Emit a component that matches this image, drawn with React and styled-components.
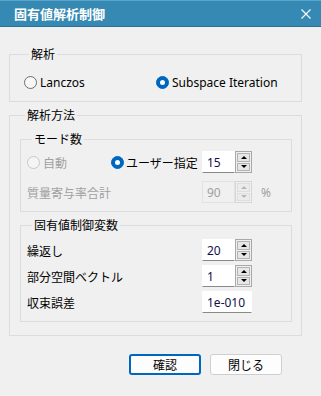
import React from 'react';
import styled, { createGlobalStyle } from 'styled-components';

const GlobalStyle = createGlobalStyle`
  html, body { margin: 0; padding: 0; background: #f0f0f0; }
  body {
    font-family: "Noto Sans", "Noto Sans CJK JP", sans-serif;
    font-size: 12px;
    color: #000;
  }
`;

const Window = styled.div`
  width: 321px;
  height: 396px;
  background: #f0f0f0;
  display: flex;
  flex-direction: column;
  overflow: hidden;
`;

const TitleBar = styled.div`
  flex: none;
  height: 27px;
  box-sizing: border-box;
  background: #3589b2;
  border-top: 1px solid #5aa7cd;
  border-bottom: 1px solid #2c6f90;
  display: flex;
  align-items: center;
  justify-content: space-between;
  padding: 0 10px 0 14px;
  color: #fff;
  font-family: "Noto Sans CJK JP", sans-serif;
  font-weight: bold;
  font-size: 13px;
`;

const CloseIcon = () => (
  <svg width="10" height="10" viewBox="0 0 10 10">
    <path d="M0.5 0.5 L9.5 9.5 M9.5 0.5 L0.5 9.5" stroke="#fff" strokeWidth="1.1" />
  </svg>
);

const Body = styled.div`
  display: flex;
  flex-direction: column;
  padding: 20px 19px 0 9px;
`;

const Group = styled.fieldset`
  margin: ${p => p.$margin || '0'};
  padding: ${p => p.$pad || '0'};
  border: 1px solid #dcdcdc;
  min-width: 0;
  display: flex;
  flex-direction: column;
`;

const Legend = styled.legend`
  margin-left: 5px;
  padding: 0 2px;
  line-height: 14px;
  font-size: 12px;
  font-family: "Noto Sans CJK JP", sans-serif;
  color: #000;
`;

const Row = styled.div`
  display: flex;
  align-items: center;
  height: ${p => p.$h || 22}px;
`;

const Choice = styled.label`
  display: flex;
  align-items: center;
  gap: ${p => p.$gap || 3}px;
  width: ${p => p.$w ? `${p.$w}px` : 'auto'};
  color: ${p => (p.$disabled ? '#a0a0a0' : '#000')};
  flex: none;
`;

const Radio = styled.span`
  box-sizing: border-box;
  width: 13px;
  height: 13px;
  border-radius: 50%;
  flex: none;
  background: ${p => (p.$checked ? '#0067c0' : p.$disabled ? '#f5f5f5' : '#f7f7f7')};
  border: 1px solid ${p => (p.$checked ? '#0067c0' : p.$disabled ? '#c8c8c8' : '#6e6e6e')};
  display: flex;
  align-items: center;
  justify-content: center;
  &::after {
    content: '';
    display: ${p => (p.$checked ? 'block' : 'none')};
    width: 5px;
    height: 5px;
    border-radius: 50%;
    background: #fff;
  }
`;

const Label = styled.span`
  width: ${p => p.$w}px;
  flex: none;
  font-family: "Noto Sans CJK JP", sans-serif;
  color: ${p => (p.$disabled ? '#a0a0a0' : '#000')};
`;

const Spin = styled.div`
  display: flex;
  height: 22px;
`;

const Field = styled.div`
  box-sizing: border-box;
  width: ${p => p.$w || 33}px;
  height: 22px;
  padding: 0 4px;
  display: flex;
  align-items: center;
  background: ${p => (p.$disabled ? '#f0f0f0' : '#fff')};
  border: 1px solid ${p => (p.$disabled ? '#e2e2e2' : '#fff')};
  border-bottom-color: ${p => (p.$disabled ? '#e2e2e2' : '#8a8a8a')};
  color: ${p => (p.$disabled ? '#a0a0a0' : '#10104a')};
  font-family: "Noto Sans", sans-serif;
  font-size: 12px;
`;

const Steps = styled.div`
  box-sizing: border-box;
  width: 17px;
  height: 22px;
  border: 1px solid ${p => (p.$disabled ? '#d6d6d6' : '#a8a8a8')};
  padding: 1px;
  display: flex;
  flex-direction: column;
  gap: 1px;
  background: #f0f0f0;
`;

const Step = styled.div`
  flex: 1;
  box-sizing: border-box;
  border: 1px solid ${p => (p.$disabled ? '#dedede' : '#b4b4b4')};
  background: ${p => (p.$disabled ? '#ececec' : '#e6e6e6')};
  display: flex;
  align-items: center;
  justify-content: center;
  &::after {
    content: '';
    width: 0;
    height: 0;
    border-left: 3px solid transparent;
    border-right: 3px solid transparent;
    ${p => (p.$down ? 'border-top' : 'border-bottom')}: 3px solid ${p => (p.$disabled ? '#b8b8b8' : '#000')};
  }
`;

const Unit = styled.span`
  margin-left: 9px;
  color: #a0a0a0;
`;

const Buttons = styled.div`
  display: flex;
  justify-content: flex-end;
  gap: 9px;
  padding: 18px 20px 0 0;
`;

const Button = styled.button`
  box-sizing: border-box;
  width: 72px;
  height: 21px;
  border-radius: 3px;
  background: #fdfdfd;
  border: ${p => (p.$primary ? '2px solid #0067c0' : '1px solid #cfcfcf')};
  font-family: "Noto Sans CJK JP", sans-serif;
  font-size: 12px;
  color: #000;
  padding: 0;
`;

const SpinBox = ({ value, disabled }) => (
  <Spin>
    <Field $disabled={disabled}>{value}</Field>
    <Steps $disabled={disabled}>
      <Step $disabled={disabled} />
      <Step $disabled={disabled} $down />
    </Steps>
  </Spin>
);

export default function App() {
  return (
    <Window>
      <GlobalStyle />
      <TitleBar>
        <span>固有値解析制御</span>
        <CloseIcon />
      </TitleBar>
      <Body>
        <Group $pad="14px 0 12px 14px">
          <Legend>解析</Legend>
          <Row $h={14}>
            <Choice $w={132}>
              <Radio />
              <span>Lanczos</span>
            </Choice>
            <Choice>
              <Radio $checked />
              <span>Subspace Iteration</span>
            </Choice>
          </Row>
        </Group>

        <Group $margin="6px 0 0 0" $pad="10px 9px 13px 10px">
          <Legend>解析方法</Legend>
          <Group $pad="5px 0 8px 6px">
            <Legend>モード数</Legend>
            <Row>
              <Choice $w={84} $disabled>
                <Radio $disabled />
                <Label $disabled>自動</Label>
              </Choice>
              <Choice $w={91} $gap={2}>
                <Radio $checked />
                <Label>ユーザー指定</Label>
              </Choice>
              <SpinBox value="15" />
            </Row>
            <Row style={{ marginTop: 8 }}>
              <Label $w={175} $disabled>質量寄与率合計</Label>
              <SpinBox value="90" disabled />
              <Unit>%</Unit>
            </Row>
          </Group>

          <Group $margin="6px 0 0 0" $pad="7px 0 8px 6px">
            <Legend>固有値制御変数</Legend>
            <Row>
              <Label $w={175}>繰返し</Label>
              <SpinBox value="20" />
            </Row>
            <Row style={{ marginTop: 4 }}>
              <Label $w={175}>部分空間ベクトル</Label>
              <SpinBox value="1" />
            </Row>
            <Row style={{ marginTop: 4 }}>
              <Label $w={175}>収束誤差</Label>
              <Field $w={50}>1e-010</Field>
            </Row>
          </Group>
        </Group>

        <Buttons>
          <Button $primary>確認</Button>
          <Button>閉じる</Button>
        </Buttons>
      </Body>
    </Window>
  );
}
